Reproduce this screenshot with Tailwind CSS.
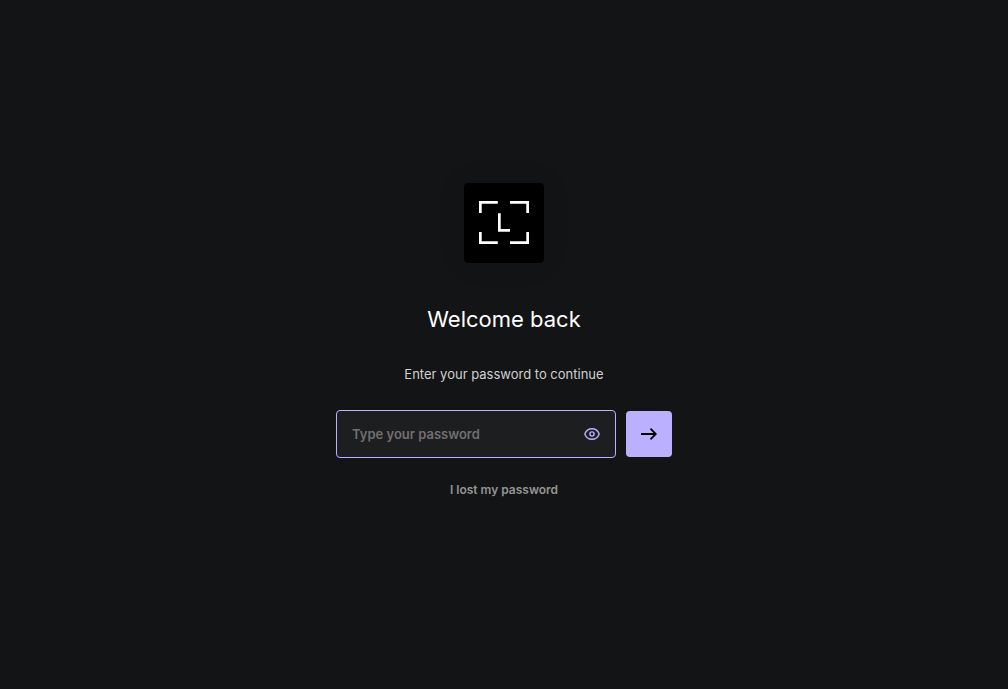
<!DOCTYPE html>
<html lang="en">
<head>
<meta charset="utf-8">
<meta name="viewport" content="width=device-width, initial-scale=1">
<title>Welcome back</title>
<script src="https://cdn.jsdelivr.net/npm/@tailwindcss/browser@4"></script>
</head>
<body class="bg-[#131415] text-white font-['Inter',sans-serif]">
<main class="min-h-screen flex flex-col items-center justify-center px-4 pb-1">
  <div class="size-20 pb-px rounded bg-black flex items-center justify-center shadow-[0_0_30px_rgba(0,0,0,0.08)]">
    <svg class="w-[50px] h-[43px]" viewBox="0 0 50 43" fill="none" stroke="#fff" stroke-width="2.7" role="img" aria-label="Ledger">
      <path d="M1.35 12V1.35H18.8M31 1.35H48.65V12M1.35 31V41.65H18.8M31 41.65H48.65V31M20.35 12.2V29.4H31"/>
    </svg>
  </div>
  <h1 class="mt-10 text-[22px] leading-8 font-normal">Welcome back</h1>
  <label for="password" class="mt-[27px] text-[13px] leading-6 text-[#d0d0d1]">Enter your password to continue</label>
  <form class="mt-6 w-full max-w-[336px] flex items-center gap-2.5">
    <div class="flex-1 min-w-0 h-12 flex items-center rounded border border-[#bbb0ff] bg-[#1d1e20] px-[15px]">
      <input id="password" type="password" placeholder="Type your password" class="flex-1 min-w-0 h-6 leading-6 bg-transparent outline-none text-[13px] font-semibold text-white placeholder:text-[#717070]">
      <button type="button" aria-label="Show password" class="text-[#bbb0ff]">
        <svg class="size-4" viewBox="0 0 16 16" fill="none" stroke="currentColor" stroke-width="1.4"><path d="M.8 8C2.1 4.4 4.5 2.7 8 2.7S13.9 4.4 15.2 8C13.9 11.6 11.5 13.3 8 13.3S2.1 11.6.8 8Z"/><circle cx="8" cy="8" r="2.1"/></svg>
      </button>
    </div>
    <button type="submit" aria-label="Continue" class="size-[46px] rounded bg-[#bbb0ff] text-black flex items-center justify-center">
      <svg class="w-4 h-3" viewBox="0 0 16 12" fill="none" stroke="currentColor" stroke-width="1.8"><path d="M0 6H15M9.5 .7L14.8 6L9.5 11.3"/></svg>
    </button>
  </form>
  <a href="#" class="mt-5 text-xs leading-6 font-semibold text-[#949494]">I lost my password</a>
</main>
</body>
</html>
